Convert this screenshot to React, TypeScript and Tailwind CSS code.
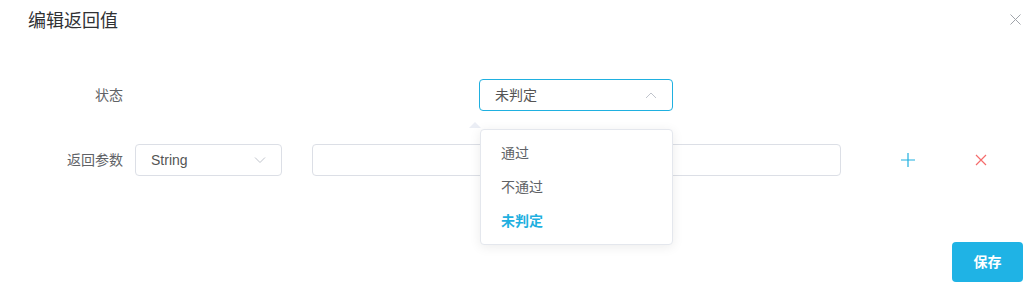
const FONT = { fontFamily: '"Liberation Sans", "Noto Sans CJK SC", "Noto Sans", sans-serif' };

function Chevron({ up }: { up?: boolean }) {
  return (
    <svg width="12" height="8" viewBox="0 0 12 8" className="text-[#c0c4cc]">
      <polyline
        points={up ? "1,7 6,2 11,7" : "1,1.5 6,6.5 11,1.5"}
        fill="none"
        stroke="currentColor"
        strokeWidth="1"
      />
    </svg>
  );
}

export default function App() {
  const options = ["通过", "不通过", "未判定"];
  const selected = "未判定";

  return (
    <div className="relative w-[1036px] h-[292px] bg-white text-[#606266]" style={FONT}>
      {/* header */}
      <div className="flex items-center justify-between pl-[28px] pr-[15px] pt-[7px]">
        <span className="text-[18px] leading-[28px] text-[#303133]">编辑返回值</span>
        <svg width="11" height="11" viewBox="0 0 11 11" className="text-[#a0a4aa] -mt-[4px]">
          <path d="M0.5 0.5 L10.5 10.5 M10.5 0.5 L0.5 10.5" stroke="currentColor" strokeWidth="1" />
        </svg>
      </div>

      {/* form */}
      <div className="mt-[44px] flex flex-col gap-[33px] pr-[19px]">
        <div className="flex items-center h-[32px]">
          <label className="w-[123px] text-right text-[14px]">状态</label>
          <div className="flex-1 ml-[12px] flex justify-center">
            <div className="relative w-[194px]">
              <div className="flex items-center justify-between h-[32px] px-[15px] rounded-[4px] border border-[#1fb0e0] text-[14px] text-[#555]">
                <span>{selected}</span>
                <Chevron up />
              </div>
              {/* popper arrow */}
              <div className="absolute left-[-10px] top-[43px] w-0 h-0 border-x-[6px] border-x-transparent border-b-[6px] border-b-[#ebeef5]" />
              {/* dropdown */}
              <div className="absolute left-[1px] top-[50px] w-[193px] py-[6px] rounded-[4px] border border-[#e4e7ed] bg-white shadow-[0_2px_12px_rgba(0,0,0,0.08)] z-10">
                {options.map((o) => (
                  <div
                    key={o}
                    className={`h-[34px] leading-[34px] px-[20px] text-[14px] ${
                      o === selected ? "text-[#1fb0e0] font-bold" : "text-[#606266]"
                    }`}
                  >
                    {o}
                  </div>
                ))}
              </div>
            </div>
          </div>
        </div>

        <div className="flex items-center h-[32px]">
          <label className="w-[123px] text-right text-[14px]">返回参数</label>
          <div className="ml-[12px] w-[147px] flex items-center justify-between h-[32px] px-[15px] rounded-[4px] border border-[#dcdfe6] text-[14px] text-[#555]">
            <span>String</span>
            <Chevron />
          </div>
          <div className="ml-[30px] w-[529px] h-[32px] rounded-[4px] border border-[#dcdfe6]" />
          <button className="ml-[60px] w-[14px] h-[14px] flex items-center justify-center">
            <svg width="14" height="14" viewBox="0 0 14 14" className="text-[#1fb0e0]">
              <path d="M7 0 V14 M0 7 H14" stroke="currentColor" strokeWidth="1.2" />
            </svg>
          </button>
          <button className="ml-[60px] w-[12px] h-[12px] flex items-center justify-center">
            <svg width="12" height="12" viewBox="0 0 12 12" className="text-[#f56c6c]">
              <path d="M1 1 L11 11 M11 1 L1 11" stroke="currentColor" strokeWidth="1.2" />
            </svg>
          </button>
        </div>
      </div>

      {/* footer */}
      <div className="absolute right-[13px] bottom-[10px]">
        <button className="w-[71px] h-[40px] rounded-[4px] bg-[#1fb3e5] text-white text-[14px] font-bold">
          保存
        </button>
      </div>
    </div>
  );
}
